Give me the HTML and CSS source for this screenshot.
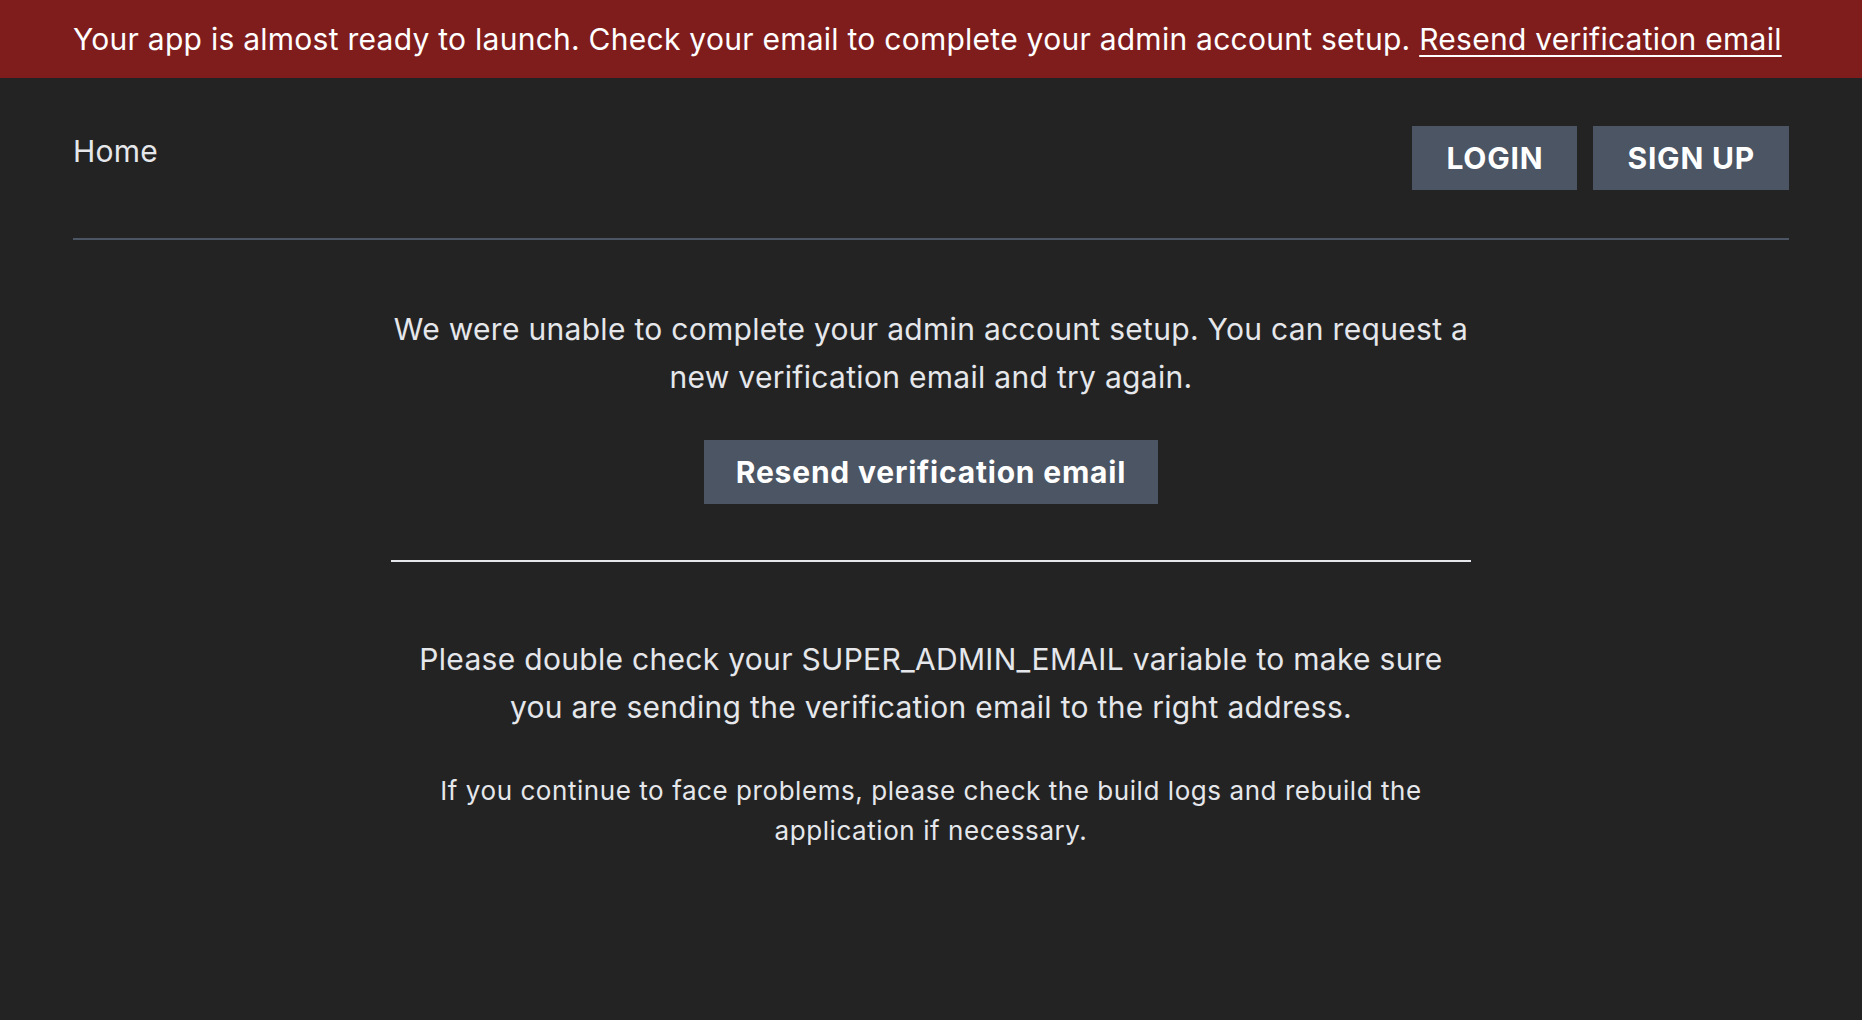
FILE: index.html
```html
<!DOCTYPE html>
<html lang="en">
<head>
<meta charset="utf-8">
<title>Verification</title>
<link rel="stylesheet" href="styles.css">
</head>
<body>
<div class="banner">Your app is almost ready to launch. Check your email to complete your admin account setup. <a href="#" class="banner-link">Resend verification email</a></div>
<header class="nav">
  <a href="#" class="nav-home">Home</a>
  <div class="nav-actions">
    <button class="btn btn-nav">LOGIN</button>
    <button class="btn btn-nav">SIGN UP</button>
  </div>
</header>
<div class="nav-rule"></div>
<main class="main">
  <p class="lead">We were unable to complete your admin account setup. You can request a new verification email and try again.</p>
  <div class="action">
    <button class="btn btn-resend">Resend verification email</button>
  </div>
  <div class="divider"></div>
  <p class="lead lead-second">Please double check your SUPER_ADMIN_EMAIL variable to make sure you are sending the verification email to the right address.</p>
  <p class="note">If you continue to face problems, please check the build logs and rebuild the application if necessary.</p>
</main>
</body>
</html>
```
FILE: styles.css
```css
html, body {
  margin: 0;
  padding: 0;
}
body {
  background: #232323;
  color: #e5e7eb;
  font-family: Inter, "Noto Sans", "Liberation Sans", sans-serif;
  min-height: 1020px;
}
.banner {
  background: #7f1d1d;
  color: #ffffff;
  font-size: 30px;
  line-height: 48px;
  letter-spacing: 0.26px;
  padding: 15px 73px;
}
.banner-link {
  color: #ffffff;
  text-decoration: underline;
  text-decoration-thickness: 2px;
  text-underline-offset: 5px;
}
.nav {
  display: flex;
  justify-content: space-between;
  align-items: flex-start;
  padding: 48px 73px 0;
}
.nav-home {
  color: #e5e7eb;
  text-decoration: none;
  font-size: 30px;
  line-height: 48px;
  letter-spacing: 0.26px;
  padding-top: 1px;
}
.nav-actions {
  display: flex;
  gap: 16px;
}
.btn {
  background: #4b5563;
  color: #ffffff;
  border: none;
  border-radius: 0;
  font-family: Inter, "Noto Sans", "Liberation Sans", sans-serif;
  font-weight: 700;
  font-size: 30px;
  line-height: 48px;
  letter-spacing: 0.8px;
  padding: 8px 32px;
  cursor: pointer;
}
.btn-nav {
  padding: 8px 34px;
}
.nav-rule {
  margin: 48px 73px 0;
  height: 2px;
  background: #4b5563;
}
.main {
  width: 1080px;
  margin: 65px auto 0;
  text-align: center;
}
.lead {
  margin: 0;
  font-size: 30px;
  line-height: 48px;
  letter-spacing: 0.3px;
}
.action {
  margin-top: 39px;
}
.divider {
  margin-top: 56px;
  height: 2px;
  background: #e5e7eb;
}
.lead-second {
  margin-top: 73px;
}
.note {
  margin: 40px 0 0;
  font-size: 26px;
  line-height: 40px;
  letter-spacing: 0.56px;
}
```
